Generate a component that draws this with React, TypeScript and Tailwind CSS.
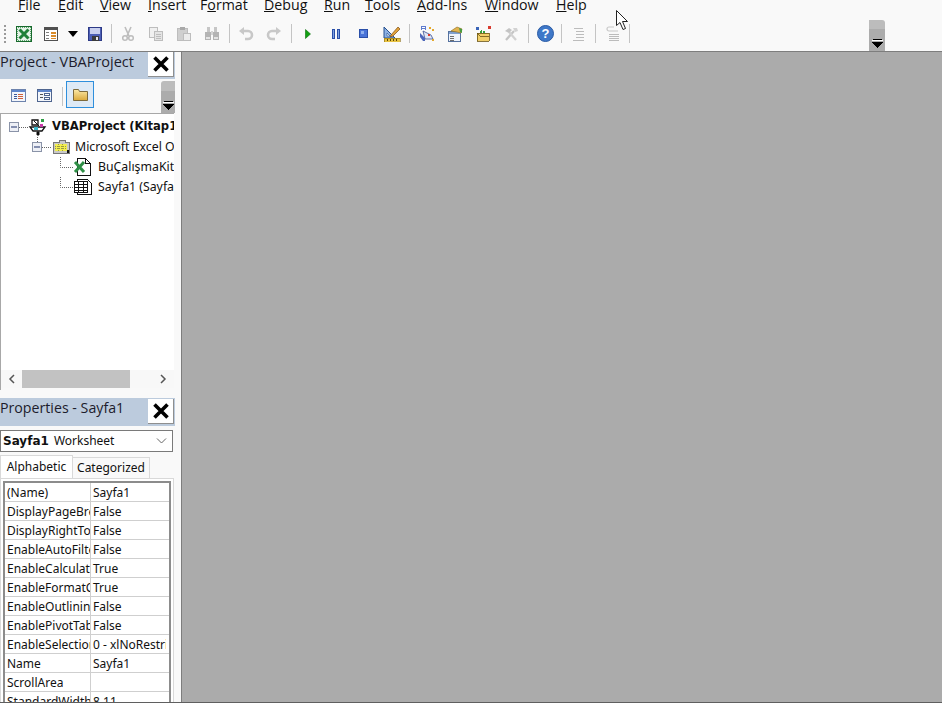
import type { ReactNode } from "react";

// VBA editor window: menu, toolbar, project + properties panes, empty MDI area

const MENU = [
  { before: "", key: "F", after: "ile", cls: "w-[40px]" },
  { before: "", key: "E", after: "dit", cls: "w-[42px]" },
  { before: "", key: "V", after: "iew", cls: "w-[48px]" },
  { before: "", key: "I", after: "nsert", cls: "w-[52px]" },
  { before: "F", key: "o", after: "rmat", cls: "w-[64px]" },
  { before: "", key: "D", after: "ebug", cls: "w-[60px]" },
  { before: "", key: "R", after: "un", cls: "w-[41px]" },
  { before: "", key: "T", after: "ools", cls: "w-[52px]" },
  { before: "", key: "A", after: "dd-Ins", cls: "w-[68px]" },
  { before: "", key: "W", after: "indow", cls: "w-[71px]" },
  { before: "", key: "H", after: "elp", cls: "w-[40px]" },
];

const PROPS = [
  ["(Name)", "Sayfa1"],
  ["DisplayPageBreaks", "False"],
  ["DisplayRightToLeft", "False"],
  ["EnableAutoFilter", "False"],
  ["EnableCalculation", "True"],
  ["EnableFormatConditionsCalculation", "True"],
  ["EnableOutlining", "False"],
  ["EnablePivotTable", "False"],
  ["EnableSelection", "0 - xlNoRestrictions"],
  ["Name", "Sayfa1"],
  ["ScrollArea", ""],
  ["StandardWidth", "8.11"],
];

function Ico({ children, w = 16, h = 16 }: { children: ReactNode; w?: number; h?: number }) {
  return (
    <svg width={w} height={h} viewBox={`0 0 ${w} ${h}`} shapeRendering="crispEdges" className="block">
      {children}
    </svg>
  );
}

function Btn({ children, cls = "w-7" }: { children: ReactNode; cls?: string }) {
  return <div className={`flex h-full items-center justify-center ${cls}`}>{children}</div>;
}

function Sep({ cls = "w-[6px]" }: { cls?: string }) {
  return (
    <div className={`flex h-full items-center justify-center ${cls}`}>
      <div className="h-[19px] w-px bg-[#c4c4c4]" />
    </div>
  );
}

const ExcelIcon = () => (
  <Ico>
    <rect x="0.5" y="0.5" width="15" height="15" fill="#e6f2e8" stroke="#17692c" />
    <rect x="1.5" y="1.5" width="13" height="13" fill="none" stroke="#5ea56f" strokeDasharray="1 1" />
    <path d="M3.5 3.5l9 9M12.5 3.5l-9 9" stroke="#1f7f38" strokeWidth="3" shapeRendering="auto" />
  </Ico>
);

const FormIcon = () => (
  <Ico w={14} h={14}>
    <rect x="0.5" y="0.5" width="13" height="13" fill="#fff" stroke="#505050" />
    <rect x="1" y="1" width="12" height="2" fill="#505050" />
    <rect x="2" y="5" width="3" height="1" fill="#808080" />
    <rect x="2" y="8" width="3" height="1" fill="#808080" />
    <rect x="2" y="11" width="3" height="1" fill="#808080" />
    <rect x="7" y="5" width="5" height="2" fill="#d98b2b" />
    <rect x="7" y="8" width="5" height="2" fill="#d98b2b" />
    <rect x="7" y="11" width="5" height="1" fill="#d98b2b" />
  </Ico>
);

const SaveIcon = () => (
  <Ico w={14} h={14}>
    <path d="M0 0h14v14H0z" fill="#4d5fb5" />
    <path d="M0.5 0.5h13v13H0.5z" fill="none" stroke="#2d3a86" />
    <rect x="2" y="1" width="10" height="6" fill="#c9d0ee" />
    <rect x="4" y="9" width="7" height="5" fill="#3b3b3b" />
    <rect x="8" y="10" width="2" height="3" fill="#e8e8e8" />
  </Ico>
);

const GRAY = "#bdbdbd";

const CutIcon = () => (
  <Ico>
    <path d="M5 1l4 9M11 1L7 10" stroke={GRAY} strokeWidth="1.6" fill="none" shapeRendering="auto" />
    <circle cx="5" cy="12" r="2.3" fill="none" stroke={GRAY} strokeWidth="1.5" shapeRendering="auto" />
    <circle cx="11" cy="12" r="2.3" fill="none" stroke={GRAY} strokeWidth="1.5" shapeRendering="auto" />
  </Ico>
);

const CopyIcon = () => (
  <Ico>
    <rect x="1.5" y="1.5" width="8" height="10" fill="#f0f0f0" stroke={GRAY} />
    <rect x="6.5" y="5.5" width="8" height="9" fill="#e4e4e4" stroke={GRAY} />
    <path d="M8 8h5M8 10h5M8 12h5" stroke={GRAY} />
  </Ico>
);

const PasteIcon = () => (
  <Ico>
    <rect x="1.5" y="2.5" width="10" height="12" fill="#cfcfcf" stroke={GRAY} />
    <rect x="4" y="1" width="5" height="3" fill="#a9a9a9" />
    <rect x="7.5" y="7.5" width="7" height="7" fill="#ececec" stroke={GRAY} />
  </Ico>
);

const FindIcon = () => (
  <Ico>
    <rect x="3" y="1" width="3" height="5" fill="#c6c6c6" />
    <rect x="10" y="1" width="3" height="5" fill="#c6c6c6" />
    <rect x="1" y="6" width="6" height="8" fill="#b4b4b4" />
    <rect x="9" y="6" width="6" height="8" fill="#b4b4b4" />
    <rect x="7" y="5" width="2" height="4" fill="#d4d4d4" />
    <rect x="2" y="11" width="4" height="2" fill="#e4e4e4" />
    <rect x="10" y="11" width="4" height="2" fill="#e4e4e4" />
  </Ico>
);

const UndoIcon = ({ flip = false }: { flip?: boolean }) => (
  <Ico>
    <g transform={flip ? "translate(16 0) scale(-1 1)" : undefined}>
      <path d="M4 5h6a3.6 3.6 0 0 1 0 8H7" fill="none" stroke="#c8c8c8" strokeWidth="2.6" shapeRendering="auto" />
      <path d="M6 1v8L1 5z" fill="#c8c8c8" shapeRendering="auto" />
    </g>
  </Ico>
);

const RunIcon = () => (
  <Ico>
    <path d="M5.5 3.5l5 4.5-5 4.5z" fill="#12a012" stroke="#0a6e0a" strokeWidth="0.6" shapeRendering="auto" />
  </Ico>
);

const PauseIcon = () => (
  <Ico>
    <rect x="4.5" y="3.5" width="2" height="9" fill="#7ea0e0" stroke="#2b4fa8" />
    <rect x="9.5" y="3.5" width="2" height="9" fill="#7ea0e0" stroke="#2b4fa8" />
  </Ico>
);

const StopIcon = () => (
  <Ico>
    <rect x="3.5" y="3.5" width="8" height="8" fill="#4a74d8" stroke="#2b4fa8" />
    <rect x="5" y="5" width="3" height="3" fill="#8fb0ee" />
  </Ico>
);

const DesignIcon = () => (
  <Ico w={18} h={16}>
    <path d="M1 1v11h11z" fill="#8db1e4" stroke="#25508f" shapeRendering="auto" />
    <path d="M4 7v3h3z" fill="#f9f9f9" stroke="#25508f" strokeWidth="0.6" shapeRendering="auto" />
    <path d="M8 9l7-8 2 2-7 7-3 1z" fill="#e2a23a" stroke="#7a4a12" strokeWidth="0.7" shapeRendering="auto" />
    <rect x="1" y="12" width="16" height="4" fill="#e7c241" stroke="#8a6a10" strokeWidth="0.6" />
    <path d="M4 13v2M7 13v2M10 13v2M13 13v2" stroke="#5b4508" />
  </Ico>
);

const ExplorerIcon = () => (
  <Ico>
    <path d="M2 0h5v4H2z" fill="#5f7ccf" />
    <path d="M3 1h3M3 3h3" stroke="#fff" />
    <path d="M4 5l2 8h8l-2-4z" fill="#dfe6f5" stroke="#3a4f92" strokeWidth="0.8" shapeRendering="auto" />
    <path d="M1 7l5 5v3H4L1 11z" fill="#4d67ba" shapeRendering="auto" />
    <rect x="10" y="1" width="2" height="2" fill="#e5a92d" />
    <rect x="13" y="3" width="2" height="2" fill="#e5a92d" />
    <rect x="9" y="8" width="2" height="2" fill="#d83a2e" />
    <rect x="13" y="13" width="2" height="2" fill="#e5a92d" />
  </Ico>
);

const PropsIcon = () => (
  <Ico>
    <rect x="1.5" y="5.5" width="12" height="10" fill="#eef3fb" stroke="#56729f" />
    <rect x="2" y="6" width="11" height="2" fill="#7fa0d0" />
    <path d="M3 10h4M3 12h4M3 14h4" stroke="#6d6d6d" />
    <path d="M4 5l6-4 5 2-1 4-4-1z" fill="#e3b34f" stroke="#8a6a1a" strokeWidth="0.6" shapeRendering="auto" />
    <path d="M12 2l3 1v4l-2-1z" fill="#4a9c3f" shapeRendering="auto" />
  </Ico>
);

const ObjectIcon = () => (
  <Ico>
    <rect x="1" y="1" width="3" height="3" fill="#3a64b8" />
    <rect x="13" y="0" width="3" height="3" fill="#d83a2e" />
    <path d="M7 4l-3 2 3 2z" fill="#36a03a" />
    <path d="M8 5h2v2H8z" fill="#36a03a" />
    <path d="M2 7h12v8H2z" fill="#f1cf68" stroke="#6a5212" strokeWidth="0.8" />
    <path d="M2 7l3 3h9" fill="none" stroke="#6a5212" strokeWidth="0.8" />
  </Ico>
);

const ToolsIcon = () => (
  <Ico>
    <path d="M3 14L11 5" stroke="#c4c4c4" strokeWidth="2.2" shapeRendering="auto" />
    <path d="M13 14L6 6" stroke="#d2d2d2" strokeWidth="2.2" shapeRendering="auto" />
    <path d="M2 5l4-3 3 2-3 3z" fill="#c4c4c4" shapeRendering="auto" />
    <path d="M10 2h4l1 3-3 1z" fill="#d2d2d2" shapeRendering="auto" />
  </Ico>
);

const HelpIcon = () => (
  <svg width="17" height="17" viewBox="0 0 17 17" className="block">
    <circle cx="8.5" cy="8.5" r="8" fill="#3f78c8" stroke="#2a5aa4" />
    <text x="8.5" y="13" textAnchor="middle" fontSize="13" fontWeight="700" fill="#fff" fontFamily="'Liberation Sans', sans-serif">
      ?
    </text>
  </svg>
);

const IndentIcon = () => (
  <Ico>
    <path d="M4 2h9M6 5h8M6 8h8M6 11h8M3 14h11" stroke="#bcbcbc" />
  </Ico>
);

const OutdentIcon = () => (
  <Ico>
    <path d="M4 8h10M4 10h10M4 12h10M4 14h10" stroke="#bcbcbc" />
    <path d="M9 1H4a2 2 0 0 0 0 4h9" fill="none" stroke="#c8c8c8" strokeWidth="1.2" shapeRendering="auto" />
  </Ico>
);

const Chevron = () => (
  <svg width="11" height="10" viewBox="0 0 11 10" className="block" shapeRendering="crispEdges">
    <rect x="1" y="0" width="9" height="1" fill="#000" />
    <rect x="0" y="1" width="11" height="1" fill="#fff" />
    <path d="M0 3h11L5.5 9z" fill="#000" />
  </svg>
);

const CloseBtn = () => (
  <div className="mr-px flex h-[25px] w-[26px] items-center justify-center border-r border-b border-[#8f8f8f] bg-white">
    <svg width="16" height="16" viewBox="0 0 16 16" className="block">
      <path d="M1.5 1.5l13 13M14.5 1.5l-13 13" stroke="#000" strokeWidth="3.6" />
    </svg>
  </div>
);

const FolderBig = () => (
  <svg width="15" height="12" viewBox="0 0 15 12" className="block">
    <defs>
      <linearGradient id="fold" x1="0" y1="0" x2="0" y2="1">
        <stop offset="0" stopColor="#fbe9a8" />
        <stop offset="1" stopColor="#dba93a" />
      </linearGradient>
    </defs>
    <path d="M0.5 0.5h5l1 2h8v9h-14z" fill="url(#fold)" stroke="#7d6a3c" />
  </svg>
);

const ViewCodeIcon = () => (
  <Ico>
    <rect x="0.5" y="1.5" width="14" height="12" fill="#f3f6fb" stroke="#6d83ad" />
    <rect x="1" y="2" width="13" height="2" fill="#5f86cc" />
    <path d="M3 6h3M3 8h3M3 10h3" stroke="#3c5a9a" />
    <path d="M7 6h5M7 8h5M7 10h5" stroke="#d0603a" />
  </Ico>
);

const ViewObjIcon = () => (
  <Ico>
    <rect x="0.5" y="1.5" width="14" height="12" fill="#f3f6fb" stroke="#4f658f" />
    <rect x="1" y="2" width="13" height="2" fill="#5f86cc" />
    <path d="M3 6h3M3 9h3" stroke="#555" />
    <rect x="7.5" y="5.5" width="5" height="2" fill="#fff" stroke="#4f658f" />
    <rect x="7.5" y="9.5" width="5" height="2" fill="#fff" stroke="#4f658f" />
  </Ico>
);

const Expander = ({ x, y }: { x: number; y: number }) => (
  <g>
    <rect x={x + 0.5} y={y + 0.5} width="9" height="9" fill="#eef0f6" stroke="#8a93a8" />
    <path d={`M${x + 2} ${y + 5}h6`} stroke="#1b2f6b" />
  </g>
);

const dots = { stroke: "#666", strokeDasharray: "1 1", fill: "none" };

function TreeRow({ lead, icon, bold, children }: { lead: ReactNode; icon: ReactNode; bold?: boolean; children: ReactNode }) {
  return (
    <div className="flex h-5 items-center">
      {lead}
      {icon}
      <span className={`ml-[5px] whitespace-nowrap ${bold ? "font-['DejaVu_Sans',sans-serif] text-[11.6px] font-bold" : "text-[12.3px]"}`}>{children}</span>
    </div>
  );
}

export default function App() {
  return (
    <div className="relative flex h-[703px] w-[942px] flex-col overflow-hidden bg-[#f9f9f9] font-['Noto_Sans','DejaVu_Sans',sans-serif] text-[12px] text-[#111]">
      {/* menu, cut off at the top of the shot */}
      <div className="flex h-4 shrink-0 items-end overflow-hidden pb-px pl-[18px] font-['Open_Sans','Noto_Sans',sans-serif] text-[14.2px] leading-[20px]">
        {MENU.map((m) => (
          <div key={m.key} className={`shrink-0 ${m.cls}`}>
            {m.before}
            <span className="underline underline-offset-1">{m.key}</span>
            {m.after}
          </div>
        ))}
      </div>

      {/* toolbar */}
      <div className="flex h-[35px] shrink-0 items-center">
        <div className="flex h-full w-[10px] items-center justify-center">
          <div className="h-[19px] w-[2px] bg-[radial-gradient(circle,#9a9a9a_1px,transparent_1px)] bg-[length:2px_4px]" />
        </div>
        <Btn cls="w-[27px]"><ExcelIcon /></Btn>
        <Btn><FormIcon /></Btn>
        <Btn cls="w-4">
          <svg width="10" height="6" viewBox="0 0 10 6" className="block"><path d="M0 0h10L5 6z" fill="#000" /></svg>
        </Btn>
        <Btn><SaveIcon /></Btn>
        <Sep cls="w-[5px]" />
        <Btn><CutIcon /></Btn>
        <Btn><CopyIcon /></Btn>
        <Btn><PasteIcon /></Btn>
        <Btn><FindIcon /></Btn>
        <Sep />
        <Btn><UndoIcon /></Btn>
        <Btn><UndoIcon flip /></Btn>
        <Sep />
        <Btn><RunIcon /></Btn>
        <Btn><PauseIcon /></Btn>
        <Btn><StopIcon /></Btn>
        <Btn><DesignIcon /></Btn>
        <Sep cls="w-[7px]" />
        <Btn><ExplorerIcon /></Btn>
        <Btn><PropsIcon /></Btn>
        <Btn><ObjectIcon /></Btn>
        <Btn><ToolsIcon /></Btn>
        <Sep />
        <Btn><HelpIcon /></Btn>
        <Sep cls="w-[5px]" />
        <Btn><IndentIcon /></Btn>
        <Sep cls="w-[7px]" />
        <Btn><OutdentIcon /></Btn>
        <Sep cls="w-[4px]" />
        <div className="mr-[57px] ml-auto flex h-[31px] w-4 flex-col items-center justify-end self-end rounded-tr-[3px] bg-[linear-gradient(#bcbcbc_30%,#acacac_30%)] pb-[2px]">
          <Chevron />
        </div>
      </div>

      <div className="h-px shrink-0 bg-[#7d7d7d]" />

      <div className="flex min-h-0 flex-1">
        {/* left docked panes */}
        <div className="flex w-[181px] shrink-0 flex-col pr-[6px]">
          <div className="flex h-[27px] shrink-0 items-start justify-between bg-[#bccbdd] text-[14.5px] leading-[19px] text-[#1c1c2c]">
            <span className="font-['Open_Sans',sans-serif]">Project - VBAProject</span>
            <CloseBtn />
          </div>
          <div className="flex h-[34px] shrink-0 items-center">
            <div className="ml-[11px] flex w-[51px] items-center justify-between pr-[9px]">
              <ViewCodeIcon />
              <ViewObjIcon />
            </div>
            <div className="h-[19px] w-px bg-[#c4c4c4]" />
            <div className="mb-[3px] ml-[3px] flex h-[27px] w-[28px] items-center justify-center border border-[#2f8fdc] bg-[#deeaf6]">
              <FolderBig />
            </div>
            <div className="ml-auto flex h-[32px] w-[14px] flex-col items-center justify-end self-end rounded-tl-[3px] bg-[linear-gradient(#bcbcbc_30%,#acacac_30%)] pb-[2px]">
              <Chevron />
            </div>
          </div>

          {/* project tree */}
          <div className="mr-px flex h-[277px] shrink-0 flex-col border-t border-l border-[#a8a8a8] bg-white">
            <div className="min-h-0 flex-1 overflow-hidden pt-[3px]">
              <TreeRow
                bold
                lead={
                  <svg width="27" height="20" className="block shrink-0">
                    <Expander x={8} y={5} />
                    <path d="M18 10.5h9" {...dots} />
                  </svg>
                }
                icon={
                  <svg width="19" height="18" viewBox="0 0 19 18" className="block shrink-0">
                    <path d="M4 2h6v5H4zM2 9h15l-3 4H5z" fill="#fff" stroke="#111" strokeWidth="1.3" />
                    <path d="M6 3l5 5M9 14h2v3H9z" stroke="#111" />
                    <rect x="13" y="1" width="3" height="3" fill="#2f9e44" />
                    <rect x="12" y="6" width="3" height="3" fill="#c93aa8" />
                    <rect x="6" y="9" width="4" height="3" fill="#38b6c8" />
                  </svg>
                }
              >
                VBAProject (Kitap1.xlsx)
              </TreeRow>
              <TreeRow
                lead={
                  <svg width="50" height="20" className="block shrink-0">
                    <path d="M36.5 0v5" {...dots} />
                    <Expander x={31} y={5} />
                    <path d="M41 10.5h9" {...dots} />
                  </svg>
                }
                icon={
                  <svg width="19" height="16" viewBox="0 0 19 16" className="block shrink-0" shapeRendering="crispEdges">
                    <path d="M2 3h6V1h6v2h4v11H2z" fill="#c9c9c9" stroke="#777" />
                    <rect x="4" y="5" width="12" height="7" fill="#f3ee4e" />
                    <path d="M4 7h12M4 9h12M7 5v7M11 5v7" stroke="#9a9a40" strokeDasharray="1 1" />
                    <rect x="16" y="11" width="2" height="3" fill="#111" />
                  </svg>
                }
              >
                Microsoft Excel Objects
              </TreeRow>
              <TreeRow
                lead={
                  <svg width="72" height="20" className="block shrink-0">
                    <path d="M59.5 0v10.5h13" {...dots} />
                  </svg>
                }
                icon={
                  <svg width="20" height="18" viewBox="0 0 20 18" className="block shrink-0" shapeRendering="crispEdges">
                    <path d="M4.5 0.5h8l5 5v12h-13z" fill="#fff" stroke="#111" />
                    <path d="M12.5 0.5v5h5" fill="none" stroke="#111" />
                    <path d="M2 4l9 10M11 4L2 14" stroke="#2f8f46" strokeWidth="3" shapeRendering="auto" />
                  </svg>
                }
              >
                BuÇalışmaKitabı (BuÇalışmaKitabı)
              </TreeRow>
              <TreeRow
                lead={
                  <svg width="72" height="20" className="block shrink-0">
                    <path d="M59.5 0v10.5h13" {...dots} />
                  </svg>
                }
                icon={
                  <svg width="20" height="16" viewBox="0 0 20 16" className="block shrink-0" shapeRendering="crispEdges">
                    <path d="M4.5 0.5h10l4 4v11h-14z" fill="#fff" stroke="#111" />
                    <rect x="1.5" y="2.5" width="13" height="11" fill="#fff" stroke="#111" />
                    <path d="M1 5.5h14M1 8.5h14M1 11h14M5.5 3v10M10.5 3v10" stroke="#111" />
                  </svg>
                }
              >
                Sayfa1 (Sayfa1)
              </TreeRow>
            </div>
            {/* bottom scrollbar */}
            <div className="flex h-[18px] shrink-0 items-center bg-[#f8f8f8]">
              <div className="flex w-[21px] justify-center">
                <svg width="8" height="10" viewBox="0 0 8 10" className="block"><path d="M6 1L2 5l4 4" fill="none" stroke="#555" strokeWidth="1.5" /></svg>
              </div>
              <div className="h-[18px] w-[108px] bg-[#c2c2c2]" />
              <div className="flex flex-1 justify-end pr-[7px]">
                <svg width="8" height="10" viewBox="0 0 8 10" className="block"><path d="M2 1l4 4-4 4" fill="none" stroke="#555" strokeWidth="1.5" /></svg>
              </div>
            </div>
            <div className="h-[2px] shrink-0 bg-[#f9f9f9]" />
          </div>

          {/* properties pane */}
          <div className="mt-[8px] flex h-[28px] shrink-0 items-start justify-between bg-[#bccbdd] text-[14.2px] leading-[20px] text-[#1c1c2c]">
            <span className="font-['Open_Sans',sans-serif]">Properties - Sayfa1</span>
            <div className="mt-px"><CloseBtn /></div>
          </div>
          <div className="mt-[4px] mr-[2px] flex h-[22px] shrink-0 items-center border border-[#7a7a7a] bg-white pr-[5px] pl-[2px]">
            <span className="font-['DejaVu_Sans',sans-serif] font-bold">Sayfa1</span>
            <span className="ml-[5px]">Worksheet</span>
            <svg width="11" height="6" viewBox="0 0 11 6" className="ml-auto block"><path d="M1 0.5l4.5 4.5L10 0.5" fill="none" stroke="#666" /></svg>
          </div>
          <div className="mt-[3px] flex h-[23px] shrink-0 items-end">
            <div className="flex h-[23px] w-[73px] items-center justify-center border-x border-t border-[#d9d9d9] bg-white">Alphabetic</div>
            <div className="flex h-[21px] w-[77px] items-center justify-center border-t border-r border-[#d9d9d9]">Categorized</div>
          </div>
          <div className="mr-px min-h-0 flex-1 overflow-hidden border-x border-t border-[#d9d9d9] bg-white px-[2px] pt-[2px]">
            <div className="border-x-2 border-t-2 border-[#8c8c8c]">
              {PROPS.map(([name, value]) => (
                <div key={name} className="flex h-[19px] items-center border-b border-[#cfcfcf]">
                  <div className="w-[86px] shrink-0 overflow-hidden border-r border-[#cfcfcf] pt-px pl-[2px] leading-[17px] whitespace-nowrap">{name}</div>
                  <div className="mr-[3px] min-w-0 flex-1 overflow-hidden pt-px pl-[2px] leading-[17px] whitespace-nowrap">{value}</div>
                </div>
              ))}
            </div>
          </div>
        </div>

        <div className="w-px shrink-0 bg-[#7d7d7d]" />
        {/* empty MDI client area */}
        <div className="flex-1 bg-[#ababab]" />
      </div>
      <div className="h-px shrink-0 bg-[#5f5f5f]" />

      {/* mouse pointer caught in the shot */}
      <svg width="14" height="21" viewBox="0 0 14 21" className="absolute top-[10px] left-[616px]">
        <path d="M0.5 0.5v15l3.5-3 3 7 2.5-1-3-7h5z" fill="#fff" stroke="#222" />
      </svg>
    </div>
  );
}
